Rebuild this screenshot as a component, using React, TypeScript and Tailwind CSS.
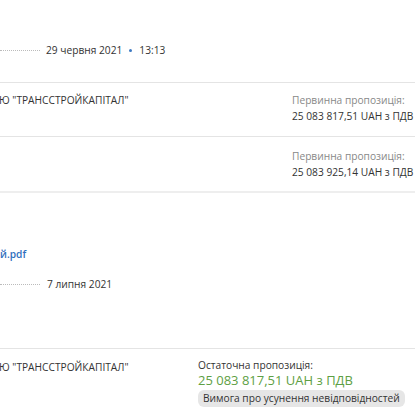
export default function App() {
  return (
    <div className="h-[415px] w-[415px] overflow-hidden whitespace-nowrap bg-white text-[10.2px] text-[#333] [font-family:'Open_Sans',sans-serif]">
      <div className="flex h-[82px] items-center pt-[18px]">
        <span className="w-[40px] border-b border-dotted border-[#bbb]" />
        <span className="ml-[6px] leading-4">29 червня 2021</span>
        <span className="mx-[7px] h-[3px] w-[3px] rounded-full bg-[#3d79c2]" />
        <span className="leading-4">13:13</span>
      </div>

      <div className="flex justify-between border-t border-[#e4e4e4] pt-[9px] pb-[12px] leading-4">
        <span className="-ml-[1px]">Ю "ТРАНССТРОЙКАПІТАЛ"</span>
        <div className="w-[123px]">
          <div className="text-[#888]">Первинна пропозиція:</div>
          <div>25 083 817,51 UAH з ПДВ</div>
        </div>
      </div>

      <div className="flex justify-end border-t border-[#e4e4e4] pt-[11px] pb-[11px] leading-4">
        <div className="w-[123px]">
          <div className="text-[#888]">Первинна пропозиція:</div>
          <div>25 083 925,14 UAH з ПДВ</div>
        </div>
      </div>

      <div className="h-[157px] border-t-2 border-[#eee]">
        <a className="mt-[53px] block font-semibold leading-4 text-[#2f6fbd]">й.pdf</a>
        <div className="mt-[14px] flex items-center">
          <span className="w-[40px] border-b border-dotted border-[#bbb]" />
          <span className="ml-[7px] leading-4">7 липня 2021</span>
        </div>
      </div>

      <div className="flex border-t border-[#e4e4e4] pt-[9px]">
        <span className="-ml-[1px] mt-[1px] w-[199px] leading-4">Ю "ТРАНССТРОЙКАПІТАЛ"</span>
        <div className="flex flex-col items-start">
          <div className="leading-[14px]">Остаточна пропозиція:</div>
          <div className="text-[13px] leading-[16px] text-[#5e9f44]">25 083 817,51 UAH з ПДВ</div>
          <div className="mt-[2px] rounded-md bg-[#e6e6e6] px-[5px] py-[1px] leading-[15px]">Вимога про усунення невідповідностей</div>
        </div>
      </div>
    </div>
  );
}
